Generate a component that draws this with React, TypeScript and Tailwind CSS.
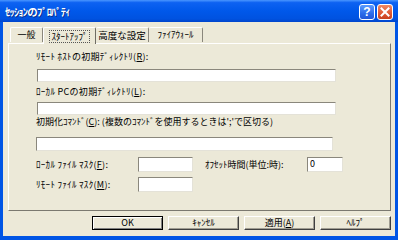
import React from "react";

const font = "font-['Noto_Sans_CJK_JP','Noto_Sans',sans-serif]";

function Input({ w, h, value, className = "" }: { w: string; h: string; value?: string; className?: string }) {
  return (
    <div
      className={`${w} ${h} ${className} bg-white border border-t-[#8a877c] border-l-[#8a877c] border-r-[#e4e2d8] border-b-[#e4e2d8] text-[9px] leading-[12px] pl-[2px] text-black`}
    >
      {value}
    </div>
  );
}

function Btn({ children, def }: { children: React.ReactNode; def?: boolean }) {
  return (
    <div
      className={`w-[71px] h-[14px] flex items-center justify-center text-[9px] leading-[12px] text-black ${
        def
          ? "border border-black shadow-[inset_1px_1px_0_#ffffff,inset_-1px_-1px_0_#808080]"
          : "border border-t-white border-l-white border-r-[#404040] border-b-[#404040] shadow-[inset_-1px_-1px_0_#a09d92]"
      }`}
    >
      {children}
    </div>
  );
}

export default function App() {
  return (
    <div className={`w-[398px] h-[240px] flex flex-col bg-[#0055e5] ${font}`}>
      {/* Title bar */}
      <div className="h-[22px] flex items-start bg-[linear-gradient(to_bottom,#4a96ff_0%,#0d62f2_12%,#0058ea_50%,#0052e0_85%,#0045cc_100%)]">
        <div className="ml-[5px] mt-[5px] text-white font-bold text-[10.5px] leading-[13px] tracking-[-0.8px] [text-shadow:1px_1px_0_#0a2f8a]">
          ｾｯｼｮﾝのﾌﾟﾛﾊﾟﾃｨ
        </div>
        <div className="ml-auto mr-[5px] mt-[4px] flex gap-[2px]">
          <div className="w-[16px] h-[16px] rounded-[3px] border border-white bg-[linear-gradient(to_bottom,#5b9bff,#2c6cea_60%,#2257d8)] flex items-center justify-center text-white font-bold text-[12px] leading-[12px] font-['Liberation_Sans',sans-serif]">
            ?
          </div>
          <div className="w-[16px] h-[16px] rounded-[3px] border border-white bg-[linear-gradient(to_bottom,#f08a64,#e05a35_55%,#c8401e)] flex items-center justify-center">
            <svg width="10" height="10" viewBox="0 0 10 10">
              <path d="M1.5 1.5 L8.5 8.5 M8.5 1.5 L1.5 8.5" stroke="white" strokeWidth="2" strokeLinecap="square" />
            </svg>
          </div>
        </div>
      </div>

      {/* Body */}
      <div className="flex-1 mx-[3px] mb-[4px] bg-[#ece9d8] flex flex-col pl-[5px] pr-[4px] pt-[4px]">
        {/* Tabs */}
        <div className="h-[17px] flex items-end pl-[2px] text-[9px] leading-[12px] text-black">
          <div className="w-[33px] h-[15px] mb-[1px] flex items-center justify-center border-t border-l border-t-white border-l-white border-r border-r-[#8a877c] rounded-t-[2px]">
            一般
          </div>
          <div className="relative z-10 w-[53px] h-[17px] -mb-[1px] flex items-start justify-center pt-[2px] bg-[#ece9d8] border-t border-l border-t-white border-l-white border-r border-r-[#6f6d64] rounded-t-[2px]">
            <span className="border border-dotted border-[#555] px-[1px] leading-[11px]">ｽﾀｰﾄｱｯﾌﾟ</span>
          </div>
          <div className="w-[53px] h-[15px] mb-[1px] flex items-center justify-center border-t border-t-white border-r border-r-[#8a877c] rounded-t-[2px] text-[9.5px]">
            高度な設定
          </div>
          <div className="w-[54px] h-[15px] mb-[1px] flex items-center justify-center border-t border-t-white border-r border-r-[#8a877c] rounded-t-[2px]">
            ﾌｧｲｱｳｫｰﾙ
          </div>
        </div>

        {/* Panel */}
        <div className="h-[168px] border border-t-white border-l-white border-r-[#7b7970] border-b-[#7b7970] flex flex-col pl-[27px] text-[9px] leading-[12px] text-black">
          <div className="mt-[7px] h-[12px] whitespace-nowrap tracking-[0.3px]">
            ﾘﾓｰﾄ ﾎｽﾄの初期ﾃﾞｨﾚｸﾄﾘ(<u>R</u>):
          </div>
          <Input w="w-[299px]" h="h-[13px]" className="mt-[6px] ml-[1px]" />
          <div className="mt-[4px] h-[12px] whitespace-nowrap tracking-[0.3px]">
            ﾛｰｶﾙ PCの初期ﾃﾞｨﾚｸﾄﾘ(<u>L</u>):
          </div>
          <Input w="w-[299px]" h="h-[13px]" className="mt-[4px] ml-[1px]" />
          <div className="mt-[1px] h-[12px] whitespace-nowrap">
            初期化ｺﾏﾝﾄﾞ(<u>C</u>): (複数のｺﾏﾝﾄﾞを使用するときは';'で区切る)
          </div>
          <Input w="w-[297px]" h="h-[14px]" className="mt-[9px]" />
          <div className="mt-[6px] h-[15px] flex items-center">
            <div className="w-[102px] whitespace-nowrap tracking-[0.3px]">
              ﾛｰｶﾙ ﾌｧｲﾙ ﾏｽｸ(<u>F</u>):
            </div>
            <Input w="w-[55px]" h="h-[15px]" />
            <div className="ml-[12px] w-[102px] whitespace-nowrap">ｵﾌｾｯﾄ時間(単位:時):</div>
            <Input w="w-[36px]" h="h-[15px]" value="0" />
          </div>
          <div className="mt-[5px] h-[15px] flex items-center">
            <div className="w-[102px] whitespace-nowrap tracking-[0.3px]">
              ﾘﾓｰﾄ ﾌｧｲﾙ ﾏｽｸ(<u>M</u>):
            </div>
            <Input w="w-[55px]" h="h-[15px]" />
          </div>
        </div>

        {/* Buttons */}
        <div className="mt-[5px] flex justify-end gap-[5px]">
          <Btn def>OK</Btn>
          <Btn>ｷｬﾝｾﾙ</Btn>
          <Btn>
            適用(<u>A</u>)
          </Btn>
          <Btn>ﾍﾙﾌﾟ</Btn>
        </div>
      </div>
    </div>
  );
}
